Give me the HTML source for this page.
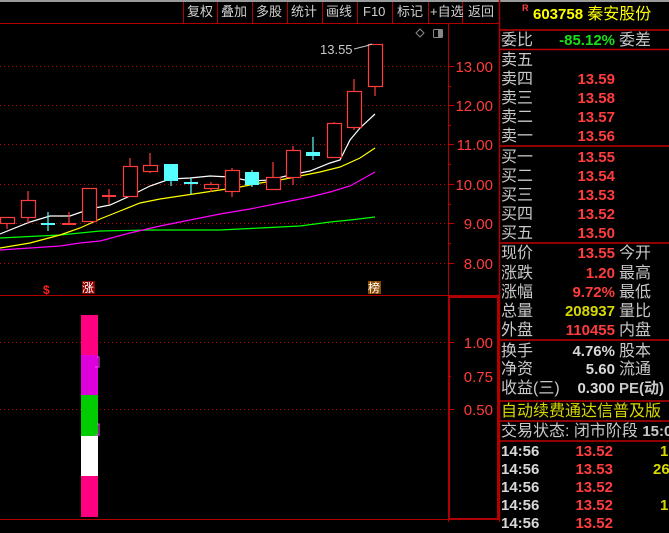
<!DOCTYPE html>
<html><head><meta charset="utf-8">
<style>
*{margin:0;padding:0;box-sizing:border-box}
body{width:669px;height:522px;background:#000;overflow:hidden;position:relative;font-family:"Liberation Sans","Noto Sans CJK SC",sans-serif}
.t{position:absolute;white-space:nowrap;line-height:19px}
.lb{color:#c8c8c8;font-size:16px;font-family:"Liberation Sans","Noto Sans CJK SC",sans-serif}
.v{font-weight:bold;font-size:15px;text-align:right}
.r{color:#ff3c3c}.y{color:#d8d800}.g{color:#18e018}.w{color:#d8d8d8}
.tb{position:absolute;top:3px;color:#d0d0d0;font-size:13px;line-height:18px}
</style></head><body>
<svg width="669" height="522" style="position:absolute;left:0;top:0">
<rect x="0" y="0" width="669" height="2" fill="#9a9a9a"/>
<line x1="0" y1="23.5" x2="499" y2="23.5" stroke="#b00000"/>
<g stroke="#b00000">
<line x1="183.5" y1="2" x2="183.5" y2="23"/><line x1="217.5" y1="2" x2="217.5" y2="23"/><line x1="252.5" y1="2" x2="252.5" y2="23"/><line x1="287.5" y1="2" x2="287.5" y2="23"/><line x1="322.5" y1="2" x2="322.5" y2="23"/><line x1="357.5" y1="2" x2="357.5" y2="23"/><line x1="392.5" y1="2" x2="392.5" y2="23"/><line x1="428.5" y1="2" x2="428.5" y2="23"/><line x1="462.5" y1="2" x2="462.5" y2="23"/>
</g>
<!-- frames -->
<line x1="448.5" y1="24" x2="448.5" y2="522" stroke="#b00000"/>
<line x1="499.5" y1="0" x2="499.5" y2="522" stroke="#b00000" stroke-width="1.5"/>
<line x1="0" y1="295.5" x2="499" y2="295.5" stroke="#b00000"/>
<line x1="0" y1="519.5" x2="448" y2="519.5" stroke="#b00000"/>
<rect x="449" y="297" width="49" height="222" fill="none" stroke="#b00000" stroke-width="2"/>
<!-- grid -->
<g stroke="#c00000" stroke-dasharray="1,3">
<line x1="0" y1="66.5" x2="448" y2="66.5"/><line x1="0" y1="105.5" x2="448" y2="105.5"/><line x1="0" y1="144.5" x2="448" y2="144.5"/><line x1="0" y1="184.5" x2="448" y2="184.5"/><line x1="0" y1="223.5" x2="448" y2="223.5"/><line x1="0" y1="263.5" x2="448" y2="263.5"/>
<line x1="0" y1="342.5" x2="448" y2="342.5"/><line x1="0" y1="409.5" x2="448" y2="409.5"/>
</g>
<g stroke="#c00000">
<line x1="448" y1="66.5" x2="454" y2="66.5"/><line x1="448" y1="105.5" x2="454" y2="105.5"/><line x1="448" y1="144.5" x2="454" y2="144.5"/><line x1="448" y1="184.5" x2="454" y2="184.5"/><line x1="448" y1="223.5" x2="454" y2="223.5"/><line x1="448" y1="263.5" x2="454" y2="263.5"/>
<line x1="448" y1="86.5" x2="451" y2="86.5"/><line x1="448" y1="125.5" x2="451" y2="125.5"/><line x1="448" y1="164.5" x2="451" y2="164.5"/><line x1="448" y1="204.5" x2="451" y2="204.5"/><line x1="448" y1="243.5" x2="451" y2="243.5"/>
<line x1="448" y1="342.5" x2="454" y2="342.5"/><line x1="448" y1="409.5" x2="454" y2="409.5"/><line x1="448" y1="376.5" x2="451" y2="376.5"/>
</g>
<g fill="#ff3c3c" font-size="15" font-family="Liberation Sans" text-anchor="end">
<text x="493" y="72">13.00</text><text x="493" y="111">12.00</text><text x="493" y="150">11.00</text><text x="493" y="190">10.00</text><text x="493" y="229">9.00</text><text x="493" y="269">8.00</text>
<text x="493" y="348">1.00</text><text x="493" y="382">0.75</text><text x="493" y="415">0.50</text>
</g>
<!-- MAs -->
<polyline fill="none" stroke="#00ff00" stroke-width="1.2" points="0,238 40,236 60,235 100,231 150,230 220,230 260,228 300,226 330,222 350,220 375,217"/>
<polyline fill="none" stroke="#ff00ff" stroke-width="1.2" points="0,250 30,248 60,246 80,243 100,241 130,233 160,226 190,220 220,214 250,209 280,203 310,197 330,192 350,186 375,172"/>
<polyline fill="none" stroke="#ffff00" stroke-width="1.2" points="0,248 30,243 60,235 80,228 100,219 120,211 140,203 160,199 180,196 200,193 220,190 240,187 260,183 280,180 300,176 320,172 340,167 360,158 375,148"/>
<polyline fill="none" stroke="#ffffff" stroke-width="1.2" points="0,234 30,222 50,216 70,216 90,209 110,205 130,196 150,186 170,179 190,178 210,176 230,177 250,181 270,180 290,175 310,171 330,163 340,160 350,140 360,128 375,114"/>
<!-- candles -->
<g stroke="#ff3c3c" stroke-width="1.2" fill="#000">
<line x1="7" y1="223" x2="7" y2="229"/><rect x="0.5" y="217.5" width="14" height="6"/>
<line x1="28" y1="191" x2="28" y2="223"/><rect x="21.5" y="200.5" width="14" height="17"/>
<line x1="69" y1="212" x2="69" y2="224"/><line x1="62" y1="224" x2="76" y2="224" stroke-width="2"/>
<rect x="82.5" y="188.5" width="14" height="33"/>
<line x1="109" y1="189" x2="109" y2="204"/><line x1="102" y1="196" x2="116" y2="196" stroke-width="2"/>
<line x1="130" y1="158" x2="130" y2="166"/><rect x="123.5" y="166.5" width="14" height="30"/>
<line x1="150" y1="153" x2="150" y2="173"/><rect x="143.5" y="165.5" width="14" height="6"/>
<line x1="211" y1="182" x2="211" y2="192"/><rect x="204.5" y="184.5" width="14" height="4"/>
<line x1="232" y1="168" x2="232" y2="197"/><rect x="225.5" y="170.5" width="14" height="21"/>
<line x1="273" y1="162" x2="273" y2="189"/><rect x="266.5" y="177.5" width="14" height="12"/>
<line x1="293" y1="146" x2="293" y2="185"/><rect x="286.5" y="150.5" width="14" height="27"/>
<line x1="334" y1="122" x2="334" y2="157"/><rect x="327.5" y="123.5" width="14" height="34"/>
<line x1="354" y1="79" x2="354" y2="130"/><rect x="347.5" y="91.5" width="14" height="36"/>
<line x1="375" y1="86" x2="375" y2="96"/><rect x="368.5" y="44.5" width="14" height="42"/>
</g>
<g stroke="#55ffff" stroke-width="1.2" fill="#55ffff">
<line x1="48" y1="212" x2="48" y2="231"/><line x1="41" y1="224" x2="55" y2="224" stroke-width="2"/>
<line x1="171" y1="164" x2="171" y2="186"/><rect x="164" y="164" width="14" height="17" stroke="none"/>
<line x1="191" y1="178" x2="191" y2="194"/><line x1="184" y1="183" x2="198" y2="183" stroke-width="2"/>
<line x1="252" y1="170" x2="252" y2="187"/><rect x="245" y="172" width="14" height="13" stroke="none"/>
<line x1="313" y1="137" x2="313" y2="160"/><rect x="306" y="152" width="14" height="4" stroke="none"/>
</g>
<text x="320" y="54" fill="#c8c8c8" font-size="13" font-family="Liberation Sans">13.55</text>
<polyline points="354,49 366,46 372,44" fill="none" stroke="#c8c8c8"/>
<polygon points="416,33 420,29 424,33 420,37" fill="none" stroke="#888"/>
<rect x="433.5" y="29.5" width="9" height="8" fill="none" stroke="#888" rx="1"/><rect x="438" y="30" width="4" height="7" fill="#888"/>
<!-- markers -->
<text x="43" y="294" fill="#ff2020" font-size="12" font-weight="bold" font-family="Liberation Sans">$</text>
<rect x="82" y="281" width="13" height="13" fill="#8a0000"/>
<text x="82" y="292" fill="#fff" font-size="12" font-family="Noto Sans CJK SC">涨</text>
<rect x="368" y="281" width="13" height="13" fill="#8a4a00"/>
<text x="368" y="292" fill="#fff" font-size="12" font-family="Noto Sans CJK SC">榜</text>
<!-- bar -->
<rect x="81" y="315" width="17" height="40" fill="#ff0080"/>
<rect x="81" y="355" width="17" height="40" fill="#dd00dd"/>
<rect x="81" y="395" width="17" height="41" fill="#00cc00"/>
<rect x="81" y="436" width="17" height="40" fill="#ffffff"/>
<rect x="81" y="476" width="17" height="41" fill="#ff0080"/>
<path d="M97 357 L99 357 L99 367 L95 367" fill="none" stroke="#ff40ff"/>
<path d="M97 424 L99 424 L99 435 L95 435" fill="none" stroke="#ff40ff"/>
<!-- right panel lines -->
<g stroke="#c00000" stroke-width="1.5">
<line x1="500" y1="30" x2="669" y2="30"/><line x1="500" y1="49.5" x2="669" y2="49.5"/><line x1="500" y1="146" x2="669" y2="146"/><line x1="500" y1="243" x2="669" y2="243"/><line x1="500" y1="340" x2="669" y2="340"/><line x1="500" y1="401" x2="669" y2="401"/><line x1="500" y1="421" x2="669" y2="421"/><line x1="500" y1="441" x2="669" y2="441"/>
</g>
<text x="522" y="11" fill="#ff4040" font-size="9" font-weight="bold" font-family="Liberation Sans">R</text>
</svg>
<div class="tb" style="left:187px">复权</div><div class="tb" style="left:221px">叠加</div><div class="tb" style="left:256px">多股</div><div class="tb" style="left:291px">统计</div><div class="tb" style="left:326px">画线</div><div class="tb" style="left:363px;font-family:'Liberation Sans'">F10</div><div class="tb" style="left:397px">标记</div><div class="tb" style="left:430px">+自选</div><div class="tb" style="left:468px">返回</div>

<div class="t" style="left:533px;top:5px;font-size:15px;font-weight:bold;color:#ffff00">603758 <span style="font-weight:normal;font-size:16px">秦安股份</span></div>
<div class="t lb" style="left:501px;top:31px">委比</div><div class="t v g" style="left:520px;width:95px;top:31px">-85.12%</div><div class="t lb" style="left:619px;top:31px">委差</div>

<div class="t lb" style="left:501px;top:51px">卖五</div>
<div class="t lb" style="left:501px;top:70px">卖四</div><div class="t v r" style="left:540px;width:75px;top:70px">13.59</div>
<div class="t lb" style="left:501px;top:89px">卖三</div><div class="t v r" style="left:540px;width:75px;top:89px">13.58</div>
<div class="t lb" style="left:501px;top:108px">卖二</div><div class="t v r" style="left:540px;width:75px;top:108px">13.57</div>
<div class="t lb" style="left:501px;top:127px">卖一</div><div class="t v r" style="left:540px;width:75px;top:127px">13.56</div>

<div class="t lb" style="left:501px;top:148px">买一</div><div class="t v r" style="left:540px;width:75px;top:148px">13.55</div>
<div class="t lb" style="left:501px;top:167px">买二</div><div class="t v r" style="left:540px;width:75px;top:167px">13.54</div>
<div class="t lb" style="left:501px;top:186px">买三</div><div class="t v r" style="left:540px;width:75px;top:186px">13.53</div>
<div class="t lb" style="left:501px;top:205px">买四</div><div class="t v r" style="left:540px;width:75px;top:205px">13.52</div>
<div class="t lb" style="left:501px;top:224px">买五</div><div class="t v r" style="left:540px;width:75px;top:224px">13.50</div>

<div class="t lb" style="left:501px;top:244px">现价</div><div class="t v r" style="left:540px;width:75px;top:244px">13.55</div><div class="t lb" style="left:619px;top:244px">今开</div>
<div class="t lb" style="left:501px;top:264px">涨跌</div><div class="t v r" style="left:540px;width:75px;top:264px">1.20</div><div class="t lb" style="left:619px;top:264px">最高</div>
<div class="t lb" style="left:501px;top:283px">涨幅</div><div class="t v r" style="left:540px;width:75px;top:283px">9.72%</div><div class="t lb" style="left:619px;top:283px">最低</div>
<div class="t lb" style="left:501px;top:302px">总量</div><div class="t v y" style="left:540px;width:75px;top:302px">208937</div><div class="t lb" style="left:619px;top:302px">量比</div>
<div class="t lb" style="left:501px;top:321px">外盘</div><div class="t v r" style="left:540px;width:75px;top:321px">110455</div><div class="t lb" style="left:619px;top:321px">内盘</div>

<div class="t lb" style="left:501px;top:342px">换手</div><div class="t v w" style="left:540px;width:75px;top:342px">4.76%</div><div class="t lb" style="left:619px;top:342px">股本</div>
<div class="t lb" style="left:501px;top:360px">净资</div><div class="t v w" style="left:540px;width:75px;top:360px">5.60</div><div class="t lb" style="left:619px;top:360px">流通</div>
<div class="t lb" style="left:501px;top:379px">收益(三)</div><div class="t v w" style="left:540px;width:75px;top:379px">0.300</div><div class="t lb" style="left:619px;top:379px;font-weight:bold;font-size:15px">PE(动)</div>

<div class="t" style="left:501px;top:402px;font-size:16px;color:#d8d800">自动续费通达信普及版</div>
<div class="t lb" style="left:501px;top:422px">交易状态: 闭市阶段 <span style="font-weight:bold;font-size:15px">15:0</span></div>

<div class="t v w" style="left:501px;top:442px;text-align:left">14:56</div><div class="t v r" style="left:540px;width:73px;top:442px">13.52</div><div class="t v y" style="left:660px;top:442px">1</div>
<div class="t v w" style="left:501px;top:460px;text-align:left">14:56</div><div class="t v r" style="left:540px;width:73px;top:460px">13.53</div><div class="t v y" style="left:653px;top:460px">26</div>
<div class="t v w" style="left:501px;top:478px;text-align:left">14:56</div><div class="t v r" style="left:540px;width:73px;top:478px">13.52</div>
<div class="t v w" style="left:501px;top:496px;text-align:left">14:56</div><div class="t v r" style="left:540px;width:73px;top:496px">13.52</div><div class="t v y" style="left:660px;top:496px">1</div>
<div class="t v w" style="left:501px;top:514px;text-align:left">14:56</div><div class="t v r" style="left:540px;width:73px;top:514px">13.52</div>
</body></html>
